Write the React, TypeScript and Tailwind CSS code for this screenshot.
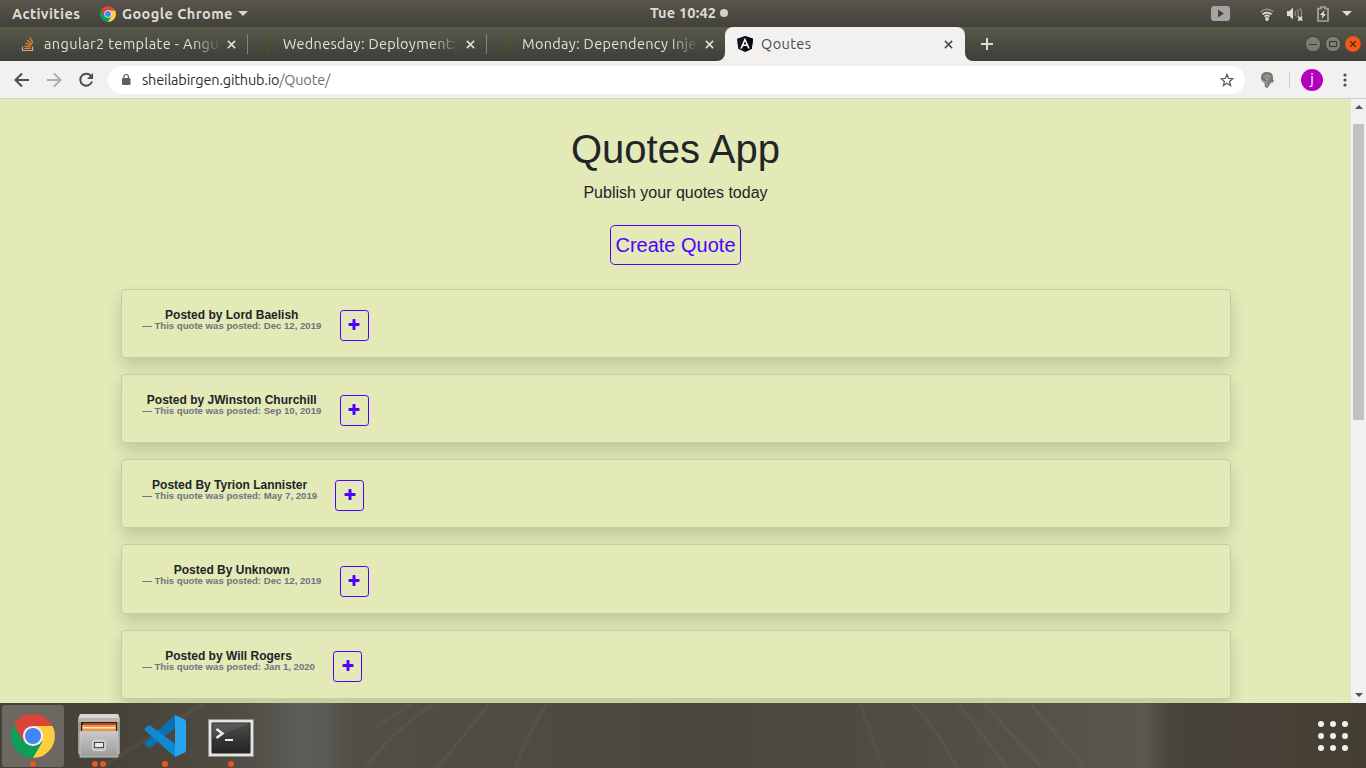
import React from "react";

const quotes = [
  { title: "Posted by Lord Baelish", date: "Dec 12, 2019" },
  { title: "Posted by JWinston Churchill", date: "Sep 10, 2019" },
  { title: "Posted By Tyrion Lannister", date: "May 7, 2019" },
  { title: "Posted By Unknown", date: "Dec 12, 2019" },
  { title: "Posted by Will Rogers", date: "Jan 1, 2020" },
];

function ChromeLogo({ className }: { className: string }) {
  return (
    <svg viewBox="0 0 48 48" className={className}>
      <path d="M24 24 L24 48 A24 24 0 0 0 45.2 13 L24 13 Z" fill="#ffcd40" />
      <path d="M3.2 12 L13.6 30 L24 13 H45.2 A24 24 0 0 0 3.2 12Z" fill="#db4437" />
      <path d="M24 48 L34.4 30 H13.6 L3.2 12 A24 24 0 0 0 24 48Z" fill="#0f9d58" />
      <circle cx="24" cy="24" r="11" fill="#f1f1f1" />
      <circle cx="24" cy="24" r="8.8" fill="#4285f4" />
    </svg>
  );
}

function Close({ className }: { className: string }) {
  return (
    <svg viewBox="0 0 10 10" className={className} fill="none" stroke="currentColor" strokeWidth="1.7">
      <path d="M1 1l8 8M9 1l-8 8" />
    </svg>
  );
}

function Tree() {
  return (
    <svg viewBox="0 0 16 16" className="h-4 w-4 shrink-0" fill="none" stroke="#4b5330" strokeWidth="1.3">
      <path d="M8.500 15L8 9L4 6M8 9l3-4M8 8V3M6 15h4M8 9l5-1" />
      <path d="M2 4h3M4 2l2 2M8 1l1 2M12 3l-2 2M1.500 7l3-1M12 6l3 1M11 8l2 2M2 9l2-1" strokeWidth="2" />
    </svg>
  );
}

function StackOverflow() {
  return (
    <svg viewBox="0 0 14 16" className="h-4 w-[14px] shrink-0" fill="none">
      <path d="M1.500 10.500v4h10v-4" stroke="#b5b4aa" strokeWidth="1.2" />
      <path d="M3.300 12.300h6.400M3.500 9.800l6.300.9M4.200 7l6 2.200M6 4.200l5 4M8.700 1.500l3.300 5.300" stroke="#f48024" strokeWidth="1.300" />
    </svg>
  );
}

function SystemBar() {
  return (
    <div className="grid h-[27px] shrink-0 grid-cols-[650px_1fr_auto] items-center bg-linear-to-b from-[#59554d] to-[#42413a] text-[14.5px] font-bold text-[#dedcd6]">
      <div className="flex items-center pl-3">
        <span className="w-[88px] tracking-[0.38px]">Activities</span>
        <ChromeLogo className="mr-1.5 h-4 w-4" />
        <span className="w-[116px] tracking-[0.42px]">Google Chrome</span>
        <svg viewBox="0 0 10 5" className="h-[5px] w-2.5" fill="#d6d4ce"><path d="M0 0h10L5 5z" /></svg>
      </div>
      <div className="flex items-center pb-px">
        <span className="w-[70px] tracking-[0.2px]">Tue 10:42</span>
        <span className="size-2 rounded-full bg-[#d3d1cc]" />
      </div>
      <div className="flex h-[27px] items-center pr-[14px]">
        <svg viewBox="0 0 19 15" className="mr-[29px] h-[15px] w-[19px]">
          <rect width="19" height="15" rx="3" fill="#a6a4a0" />
          <path d="M7 3.500v8l6-4z" fill="#42413c" />
        </svg>
        <svg viewBox="0 0 16 14" className="mr-[11px] h-[14px] w-4" fill="none" strokeWidth="1.700">
          <path d="M1.500 5a9.500 9.500 0 0 1 13 0" stroke="#8b8983" />
          <path d="M3.500 7.400a6.500 6.500 0 0 1 9 0M5.500 9.600a3.600 3.600 0 0 1 5 0" stroke="#dedcd8" />
          <circle cx="8" cy="12" r="1.900" fill="#dedcd8" />
        </svg>
        <svg viewBox="0 0 18 16" className="mr-[13px] h-4 w-[18px]" fill="none">
          <path d="M1 5h2.500L7 1.500v12L3.500 10H1z" fill="#dedcd8" />
          <path d="M9 5q1.500 2.500 0 5M11 3.500q3 4 0 7.500M13.500 2q3.500 4 1.500 8" stroke="#8b8983" strokeWidth="1.300" />
          <path d="M12.200 10.700l4 4M16.200 10.700l-4 4" stroke="#e4e2de" strokeWidth="1.700" />
        </svg>
        <svg viewBox="0 0 12 16" className="mr-[13px] h-4 w-3" fill="none">
          <path d="M4 2.500V1h4v1.500h3V15H1V2.500z" stroke="#a6a49f" strokeWidth="1.700" />
          <path d="M7.800 4L3 9h2.500l-1 4L9 8H6.500z" fill="#e4e2de" />
        </svg>
        <svg viewBox="0 0 10 5" className="h-[5px] w-2.5" fill="#dedcd8"><path d="M0 0h10L5 5z" /></svg>
      </div>
    </div>
  );
}

function TabLabel({ children, className }: { children: string; className: string }) {
  return (
    <span
      className={`mr-[8px] w-[178px] shrink-0 whitespace-nowrap [mask-image:linear-gradient(to_right,#000_83%,transparent_100%)] ${className}`}
    >
      {children}
    </span>
  );
}

function TabStrip() {
  return (
    <div className="flex h-[34px] shrink-0 bg-linear-to-b from-[#585a4b] to-[#3e3d37] text-[14.5px] text-[#e2e1d8]">
      <div className="flex w-[247px] items-center pl-[21px]">
        <StackOverflow />
        <TabLabel className="ml-[9px] tracking-[0.400px]">angular2 template - Angu</TabLabel>
        <Close className="mt-px -ml-[3px] h-[9px] w-[9px] shrink-0" />
      </div>
      <div className="my-[7px] w-px bg-[#86857b]" />
      <div className="flex w-[238px] items-center pl-[12px]">
        <Tree />
        <TabLabel className="ml-[7px] tracking-[0.3px]">Wednesday: Deployment:</TabLabel>
        <Close className="mt-px -ml-[3px] h-[9px] w-[9px] shrink-0" />
      </div>
      <div className="my-[7px] w-px bg-[#86857b]" />
      <div className="flex w-[238px] items-center pl-[12px]">
        <Tree />
        <TabLabel className="ml-[7px] tracking-[0.3px]">Monday: Dependency Inje</TabLabel>
        <Close className="mt-px -ml-[3px] h-[9px] w-[9px] shrink-0" />
      </div>
      <div className="relative flex w-[240px] items-center rounded-t-[8px] bg-[#f2f1f0] pl-3 text-[#4c4c49]">
        <svg viewBox="0 0 8 8" className="absolute bottom-0 -left-2 size-2" fill="#f2f1f0"><path d="M8 0v8H0A8 8 0 0 0 8 0z" /></svg>
        <svg viewBox="0 0 8 8" className="absolute -right-2 bottom-0 size-2" fill="#f2f1f0"><path d="M0 0v8h8A8 8 0 0 1 0 0z" /></svg>
        <svg viewBox="0 0 16 16" className="mr-2 size-4">
          <path d="M8 0l8 2.700-1.200 10L8 16l-6.800-3.300L0 2.700z" fill="#11131c" />
          <path d="M8 0l8 2.700-1.200 10L8 16z" fill="#05060b" />
          <path d="M8 1.800L3.200 12.400H5l1-2.400h4l1 2.400h1.800zM8 5.200l1.400 3.300H6.600z" fill="#fff" fillRule="evenodd" />
        </svg>
        <span className="w-[183px] tracking-[0.400px]">Qoutes</span>
        <Close className="mt-px h-[9px] w-[9px]" />
      </div>
      <div className="flex flex-1 items-center">
        <svg viewBox="0 0 12 12" className="ml-4 size-3" stroke="#dfded5" strokeWidth="2"><path d="M6 0v12M0 6h12" /></svg>
      </div>
      <div className="flex items-center gap-1 pr-[5px]">
        <svg viewBox="0 0 16 16" className="size-4"><circle cx="8" cy="8" r="7.700" fill="#7e7d75" stroke="#383731" strokeWidth=".8" /><path d="M4 8.500h8" stroke="#383731" /></svg>
        <svg viewBox="0 0 16 16" className="size-4"><circle cx="8" cy="8" r="7.700" fill="#7e7d75" stroke="#383731" strokeWidth=".8" /><path d="M4.500 5.500h7v5h-7z" fill="none" stroke="#383731" /></svg>
        <svg viewBox="0 0 16 16" className="size-4"><circle cx="8" cy="8" r="7.900" fill="#f05a17" stroke="#a84a24" strokeWidth=".6" /><path d="M5.200 5.200l5.600 5.600M10.800 5.200l-5.600 5.600" stroke="#48200f" strokeWidth="1.200" /></svg>
      </div>
    </div>
  );
}

function Toolbar() {
  return (
    <div className="flex h-[38px] shrink-0 items-center border-b border-[#cfcecd] bg-[#f2f1f0] pl-[14px]">
      <svg viewBox="0 0 16 16" className="size-4" fill="none" stroke="#4d4d4b" strokeWidth="2"><path d="M15 8H2M8 1.500L1.500 8 8 14.500" /></svg>
      <svg viewBox="0 0 16 16" className="ml-4 size-4" fill="none" stroke="#adadab" strokeWidth="2"><path d="M1 8h13M8 1.500L14.500 8 8 14.500" /></svg>
      <svg viewBox="0 0 16 16" className="ml-4 size-4" fill="none"><path d="M13.200 4.200A6 6 0 1 0 14 9.500" stroke="#4d4d4b" strokeWidth="2" /><path d="M15 1v6H9z" fill="#4d4d4b" /></svg>
      <div className="ml-[14px] flex h-7 w-[1137px] items-center rounded-full bg-white pr-[11px] pl-[13px] text-[14.5px]">
        <svg viewBox="0 0 10 12" className="mr-[11px] h-[13px] w-[10px]"><rect x="1" y="4.500" width="8.500" height="7" rx="1" fill="#5e5e5c" /><path d="M3 5V3.200a2.200 2.200 0 0 1 4.400 0V5" fill="none" stroke="#5e5e5c" strokeWidth="1.200" /></svg>
        <span className="flex-1 tracking-[-0.17px] text-[#2f2f2d]">sheilabirgen.github.io<span className="text-[#70706e]">/Quote/</span></span>
        <svg viewBox="0 0 14 14" className="size-[14px]" fill="none" stroke="#5e5e5c" strokeWidth="1.300"><path d="M7 1.500l1.600 3.800 4.200.4-3.200 2.700 1 4.100L7 10.300l-3.600 2.200 1-4.100L1.200 5.700l4.200-.4z" /></svg>
      </div>
      <svg viewBox="0 0 14 16" className="ml-[15px] h-4 w-[14px]">
        <path d="M7 0c4 0 6 2.500 6 5.500v2l1 1-1.500 2.500-1.500-.5-1.500 2.500L7.500 16 5 15l-.5-4C2 10 1 8 1 5.500 1 2 3.500 0 7 0z" fill="#777774" />
        <path d="M4 5.500c0-3 5.500-3.500 6-.5.300 2.500-4 3.500-4.500 1.500s2.500-2 2.500-1M2.500 8.500l3 2 3-1.500M7 11v3" fill="none" stroke="#b3b3b0" strokeWidth="1" />
      </svg>
      <div className="ml-[15px] h-4 w-px bg-[#cfcfcd]" />
      <div className="ml-[11px] flex size-[22px] items-center justify-center rounded-full bg-[#b400bd] pb-px text-[14.5px] text-white">j</div>
      <svg viewBox="0 0 4 14" className="ml-[19.500px] h-[14px] w-1" fill="#4d4d4b"><circle cx="2" cy="2" r="1.600" /><circle cx="2" cy="7" r="1.600" /><circle cx="2" cy="12" r="1.600" /></svg>
    </div>
  );
}

function QuoteCard({ title, date }: { title: string; date: string }) {
  return (
    <article className="mb-4 flex h-[69.15px] shrink-0 items-start rounded-[4px] border border-[#c7cda1] bg-[#e3e9b7] px-[20.700px] pt-[20.100px] shadow-[0_8px_16px_rgba(0,0,0,0.15)]">
      <h5 className="-mt-[0.100px] mr-[18.200px] text-center text-[12px] leading-[11px] font-bold text-[#212529]">
        <span className="block">{title}</span>
        <span className="block text-[9.6px] leading-[9px] text-[#6c757d]">— This quote was posted: {date}</span>
      </h5>
      <button className="flex h-[31px] w-[29px] items-start justify-center rounded-[3.2px] border border-[#5000ff] pt-[7px]">
        <svg viewBox="0 0 1792 1792" className="size-[14px]" fill="#5000ff">
          <path d="M1600 736v192q0 40-28 68t-68 28h-416v416q0 40-28 68t-68 28h-192q-40 0-68-28t-28-68v-416h-416q-40 0-68-28t-28-68v-192q0-40 28-68t68-28h416v-416q0-40 28-68t68-28h192q40 0 68 28t28 68v416h416q40 0 68 28t28 68z" />
        </svg>
      </button>
    </article>
  );
}

function Page() {
  return (
    <div className="flex min-h-0 flex-1 font-['Liberation_Sans',Arial,sans-serif]">
      <main className="flex flex-1 flex-col overflow-hidden bg-[#e3e9b7] px-[120.5px] text-[#212529]">
        <header className="flex shrink-0 flex-col items-center pt-[26px] pb-6">
          <h1 className="mb-2 text-[40px] leading-[48px]">Quotes App</h1>
          <p className="mb-5 text-[16px] leading-6">Publish your quotes today</p>
          <button className="h-10 w-[131px] rounded-[4.800px] border border-[#5000ff] text-[20px] leading-[38px] whitespace-nowrap text-[#5000ff]">Create Quote</button>
        </header>
        {quotes.map((q) => (
          <QuoteCard key={q.title} title={q.title} date={q.date} />
        ))}
      </main>
      <div className="flex w-[15px] flex-col items-center bg-[#f1f1f1]">
        <svg viewBox="0 0 8 4" className="mt-[6px] h-1 w-2 shrink-0" fill="#505050"><path d="M4 0l4 4H0z" /></svg>
        <div className="mt-[15px] h-[296px] w-[11px] shrink-0 bg-[#c1c1c1]" />
        <svg viewBox="0 0 8 4" className="mt-auto mb-[6px] h-1 w-2 shrink-0" fill="#505050"><path d="M4 4l4-4H0z" /></svg>
      </div>
    </div>
  );
}

function DockItem({ children, dots, active }: { children: React.ReactNode; dots: number; active?: boolean }) {
  return (
    <div className={`flex h-[62px] w-[62px] flex-col items-center rounded-[3px] ${active ? "bg-[#6c6761]" : ""}`}>
      <div className="flex h-[56px] items-center pt-[6px]">{children}</div>
      <div className="flex gap-[2.500px]">
        {Array.from({ length: dots }, (_, i) => (
          <span key={i} className="size-[6px] rounded-full bg-[#e95420]" />
        ))}
      </div>
    </div>
  );
}

function Streaks() {
  return (
    <svg viewBox="0 0 1366 65" className="absolute inset-0 h-[65px] w-[1366px] blur-[1px]" fill="none" stroke="#77746a" strokeOpacity=".32" strokeWidth="2">
      <path d="M205 0L100 65M435 0Q390 30 366 65M490 0L437 65M547 0Q525 35 516 65M860 0L883 65M912 0Q940 30 957 65M958 0L1008 65M983 0Q1020 40 1042 65M1030 0L1085 65M412 0L375 25" />
    </svg>
  );
}

function Dock() {
  return (
    <div className="relative flex h-[65px] shrink-0 overflow-hidden bg-[linear-gradient(to_right,#464137_0px,#484338_120px,#504c44_240px,#5e5d58_300px,#5a5953_325px,#504e45_355px,#4f4b43_540px,#4b473d_690px,#4e4a42_830px,#4f4c41_900px,#56524b_1050px,#5a5650_1145px,#48443a_1172px,#484137_1270px,#443e32_1366px)]">
      <Streaks />
      <div className="relative flex flex-1 items-center gap-1 pl-[2px]">
        <DockItem dots={1} active><ChromeLogo className="size-[44px]" /></DockItem>
        <DockItem dots={2}>
          <svg viewBox="0 0 42 44" className="h-[44px] w-[42px]">
            <defs>
              <linearGradient id="steel" x2="0" y2="1"><stop stopColor="#c9c9c9" /><stop offset="1" stopColor="#9b9b9b" /></linearGradient>
            </defs>
            <path d="M1.500 1h39l1.500 4v35H0V5z" fill="#989898" />
            <path d="M2 0h38l1.500 4H.5z" fill="#d6d6d6" />
            <path d="M.5 4h41v4H.5z" fill="#b5b5b5" />
            <path d="M3 8h36v10H3z" fill="#2b1c15" />
            <path d="M5 9h33v8H5z" fill="#b9481a" />
            <path d="M4 11h34v6H4z" fill="#f0933f" />
            <path d="M5 13h32v1.500H5z" fill="#f7e8d7" />
            <path d="M2 17.500h38v25.500H2z" fill="url(#steel)" stroke="#c4c4c4" />
            <rect x="14.500" y="26.500" width="13" height="10" rx="2" fill="#bfbfbf" stroke="#dadada" />
            <rect x="16.500" y="28.500" width="9" height="5" fill="#e9e9e9" stroke="#494949" />
          </svg>
        </DockItem>
        <DockItem dots={1}>
          <svg viewBox="0 0 42 42" className="size-[42px]">
            <path d="M31 0L1.200 27.500a1.500 1.500 0 0 0 0 2.200l3 2.700a2 2 0 0 0 2.300 0L31 13z" fill="#0b72b2" />
            <path d="M31 42L1.200 15.500a1.500 1.500 0 0 1 0-2.200l3-2.500a2 2 0 0 1 2.300 0L31 29z" fill="#0c8bd4" />
            <path d="M31 0l9.800 4.500L42 6.300v29.400l-1.200 1.800L31 42z" fill="#27a5ee" />
          </svg>
        </DockItem>
        <DockItem dots={1}>
          <svg viewBox="0 0 46 38" className="mt-[4px] h-[38px] w-[46px]">
            <defs>
              <linearGradient id="screen" x2="0" y2="1"><stop stopColor="#4b4b4a" /><stop offset="1" stopColor="#242424" /></linearGradient>
            </defs>
            <path d="M.5.500h45v37H.5z" fill="#e4e4e2" stroke="#92928f" />
            <path d="M4 4h38v30H4z" fill="url(#screen)" stroke="#252525" />
            <path d="M4 4h38L4 20z" fill="#fff" fillOpacity=".09" />
            <path d="M8.500 10l6 4.500-6 4.500" fill="none" stroke="#efefef" strokeWidth="2.400" />
            <path d="M17 21h8" stroke="#efefef" strokeWidth="2" />
          </svg>
        </DockItem>
        <div className="mr-[18px] ml-auto grid grid-cols-3 gap-[6px] pt-[1px]">
          {Array.from({ length: 9 }, (_, i) => (
            <span key={i} className="size-[6px] rounded-full bg-[#f1f0ee]" />
          ))}
        </div>
      </div>
    </div>
  );
}

export default function App() {
  return (
    <div className="flex h-[768px] w-[1366px] flex-col overflow-hidden font-['Ubuntu','Noto_Sans',sans-serif]">
      <SystemBar />
      <TabStrip />
      <Toolbar />
      <Page />
      <Dock />
    </div>
  );
}
